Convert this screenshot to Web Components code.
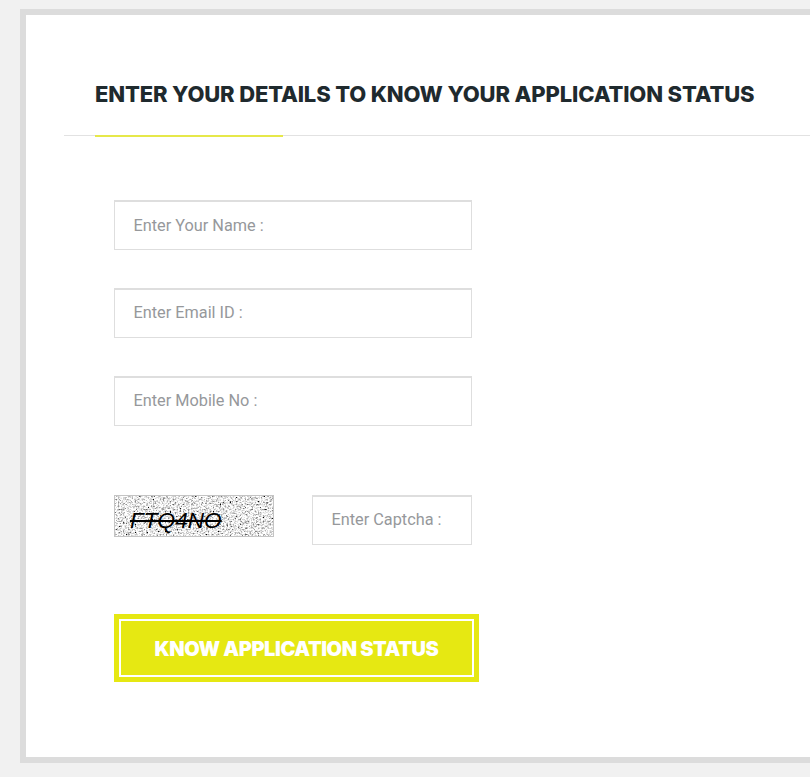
<!DOCTYPE html>
<html lang="en">
<head>
<meta charset="utf-8"/>
<title>Application Status</title>
<style>
  html, body { margin: 0; height: 100%; background: #f1f1f1; overflow: hidden; }
  body { padding: 9px 0 0 20px; box-sizing: border-box; font-family: Roboto, "Liberation Sans", sans-serif; }
</style>
</head>
<body>
<status-panel>
  <span slot="title">Enter your details to know your application status</span>
  <text-field style="padding-bottom: 0">Enter Your Name :</text-field>
  <text-field>Enter Email ID :</text-field>
  <text-field>Enter Mobile No :</text-field>
  <captcha-row code="FTQ4NO">Enter Captcha :</captcha-row>
  <submit-button>Know Application Status</submit-button>
</status-panel>

<script>
const panelTemplate = document.createElement('template');
panelTemplate.innerHTML = `
  <style>
    :host {
      display: block;
      width: 830px;
      height: 754px;
      box-sizing: border-box;
      border: 6px solid #dcdcdc;
      background: #fff;
    }
    header {
      margin: 0 0 0 38px;
      height: 121px;
      box-sizing: border-box;
      padding: 63px 0 0 31px;
      border-bottom: 1px solid #e2e2e2;
      position: relative;
    }
    h2 {
      margin: 0;
      font: 800 22px/32px Inter, "Open Sans", sans-serif;
      letter-spacing: -0.15px;
      color: #1f2a2e;
      text-transform: uppercase;
      white-space: nowrap;
    }
    header::after {
      content: "";
      position: absolute;
      left: 31px;
      bottom: -2px;
      width: 188px;
      height: 2px;
      background: #e6e84a;
    }
    .fields {
      display: flex;
      flex-direction: column;
      gap: 38px;
      padding: 64px 0 0 88px;
      align-items: flex-start;
    }
  </style>
  <header><h2><slot name="title"></slot></h2></header>
  <div class="fields"><slot></slot></div>`;

class StatusPanel extends HTMLElement {
  constructor() {
    super();
    this.attachShadow({ mode: 'open' });
    this.shadowRoot.appendChild(panelTemplate.content.cloneNode(true));
  }
}

const fieldTemplate = document.createElement('template');
fieldTemplate.innerHTML = `
  <style>
    :host {
      display: flex;
      align-items: center;
      position: relative;
      width: var(--field-width, 358px);
      height: 50px;
      box-sizing: border-box;
      padding-left: 18.5px;
      padding-bottom: 2px;
      border: 1px solid #dedede;
      border-top-width: 2px;
      background: #fff;
      font: 400 16.3px Roboto, sans-serif;
      color: #96989b;
    }
    input {
      position: absolute;
      inset: 0;
      border: 0;
      padding: 0 19px;
      background: transparent;
      font: inherit;
      color: #333;
      outline: none;
    }
    :host(.filled) span { visibility: hidden; }
  </style>
  <span><slot></slot></span>
  <input type="text"/>`;

class TextField extends HTMLElement {
  constructor() {
    super();
    this.attachShadow({ mode: 'open' });
    this.shadowRoot.appendChild(fieldTemplate.content.cloneNode(true));
  }

  connectedCallback() {
    const input = this.shadowRoot.querySelector('input');
    input.oninput = () => this.classList.toggle('filled', input.value !== '');
  }
}

const captchaTemplate = document.createElement('template');
captchaTemplate.innerHTML = `
  <style>
    :host {
      display: flex;
      justify-content: space-between;
      align-items: flex-start;
      width: 358px;
      margin-top: 31px;
      --field-width: 160px;
    }
    .code {
      position: relative;
      width: 160px;
      height: 42px;
      box-sizing: border-box;
      border: 1px solid #c4c4c4;
      overflow: hidden;
      display: flex;
      align-items: center;
      padding: 9px 0 0 15px;
    }
    svg { position: absolute; inset: 0; width: 100%; height: 100%; }
    b {
      position: relative;
      font: italic 400 22.6px "Liberation Sans", sans-serif;
      color: #000;
      text-decoration: line-through;
      text-decoration-thickness: 2px;
    }
  </style>
  <div class="code">
    <svg xmlns="http://www.w3.org/2000/svg">
      <filter id="noise" x="0" y="0" width="100%" height="100%">
        <feTurbulence type="fractalNoise" baseFrequency="0.6" numOctaves="3" seed="11"/>
        <feColorMatrix values="1.7 1.7 0 0 -0.88  1.7 1.7 0 0 -0.88  1.7 1.7 0 0 -0.88  0 0 0 0 1"/>
        <feGaussianBlur stdDeviation="0.4"/>
      </filter>
      <rect width="100%" height="100%" filter="url(#noise)"/>
    </svg>
    <b></b>
  </div>
  <text-field><slot></slot></text-field>`;

class CaptchaRow extends HTMLElement {
  constructor() {
    super();
    this.attachShadow({ mode: 'open' });
    this.shadowRoot.appendChild(captchaTemplate.content.cloneNode(true));
  }

  connectedCallback() {
    this.shadowRoot.querySelector('b').textContent = this.getAttribute('code');
  }
}

const buttonTemplate = document.createElement('template');
buttonTemplate.innerHTML = `
  <style>
    :host {
      display: block;
      margin-top: 31px;
      width: 365px;
      height: 68px;
      box-sizing: border-box;
      padding: 5px;
      background: #e6e812;
      cursor: pointer;
    }
    div {
      height: 100%;
      box-sizing: border-box;
      border: 2px solid #fff;
      padding-top: 1px;
      display: flex;
      align-items: center;
      justify-content: center;
      color: #fff;
      font: 900 20px Inter, "Open Sans", sans-serif;
      letter-spacing: -0.42px;
      text-transform: uppercase;
    }
  </style>
  <div><slot></slot></div>`;

class SubmitButton extends HTMLElement {
  constructor() {
    super();
    this.attachShadow({ mode: 'open' });
    this.shadowRoot.appendChild(buttonTemplate.content.cloneNode(true));
  }
}

customElements.define('status-panel', StatusPanel);
customElements.define('text-field', TextField);
customElements.define('captcha-row', CaptchaRow);
customElements.define('submit-button', SubmitButton);
</script>
</body>
</html>
